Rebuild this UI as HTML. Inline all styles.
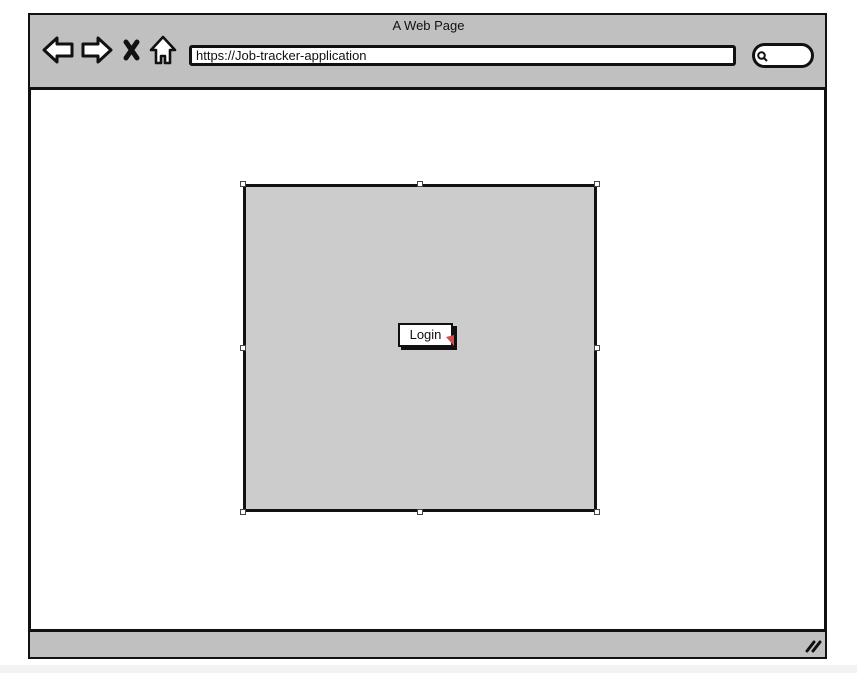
<!DOCTYPE html>
<html><head><style>
body{margin:0;width:857px;height:673px;background:#fff;position:relative;overflow:hidden;font-family:"Comic Sans MS","Liberation Sans",sans-serif}
.a{position:absolute;box-sizing:border-box}
.h{position:absolute;width:6px;height:6px;background:#fff;border:1px solid #444;box-sizing:border-box}
</style></head><body>
<div class="a" style="left:0;top:665px;width:857px;height:8px;background:#f2f2f2"></div>
<div class="a" style="left:28px;top:13px;width:799px;height:646px;border:3px solid #111;background:#fff"></div>
<div class="a" style="left:30px;top:15px;width:795px;height:75px;background:#c0c0c0;border-bottom:3px solid #111"></div>
<div class="a" style="left:30px;top:629px;width:795px;height:28px;background:#c0c0c0;border-top:3px solid #111"></div>
<div class="a" style="left:0;top:18px;width:857px;text-align:center;font-size:13px;color:#111">A Web Page</div>
<svg class="a" style="left:40px;top:35px" width="140" height="32" viewBox="0 0 140 32">
<path d="M4 15 L17 3 L17 9 L32 9 L32 21 L17 21 L17 27 Z" fill="#fff" stroke="#111" stroke-width="3" stroke-linejoin="round"/>
<path d="M71 15 L58 3 L58 9 L43 9 L43 21 L58 21 L58 27 Z" fill="#fff" stroke="#111" stroke-width="3" stroke-linejoin="round"/>
<path d="M86 7 L97 23 M97 7 L86 23" stroke="#111" stroke-width="5" stroke-linecap="round"/>
<path d="M123 2 L111 15 L116 15 L116 28 L121 28 L121 21 L125 21 L125 28 L130 28 L130 15 L135 15 Z" fill="#fff" stroke="#111" stroke-width="2.6" stroke-linejoin="round"/>
</svg>
<div class="a" style="left:189px;top:45px;width:547px;height:21px;background:#fff;border:3px solid #111;border-radius:3px;font-size:13px;line-height:15px;padding-left:4px;color:#111">https://Job-tracker-application</div>
<div class="a" style="left:752px;top:43px;width:62px;height:25px;background:#fff;border:3px solid #111;border-radius:13px"></div>
<svg class="a" style="left:756px;top:50px" width="14" height="14"><circle cx="5.5" cy="5.5" r="3.3" fill="none" stroke="#111" stroke-width="2"/><path d="M8 8 L11 11" stroke="#111" stroke-width="2"/></svg>
<svg class="a" style="left:804px;top:638px" width="20" height="16"><path d="M3 13 L10 4 M9 13 L16 4" stroke="#111" stroke-width="3" stroke-linecap="round"/></svg>
<div class="a" style="left:243px;top:184px;width:354px;height:328px;background:#ccc;border:3px solid #111"></div>
<div class="h" style="left:240px;top:181px"></div><div class="h" style="left:417px;top:181px"></div><div class="h" style="left:594px;top:181px"></div>
<div class="h" style="left:240px;top:345px"></div><div class="h" style="left:594px;top:345px"></div>
<div class="h" style="left:240px;top:509px"></div><div class="h" style="left:417px;top:509px"></div><div class="h" style="left:594px;top:509px"></div>
<div class="a" style="left:401px;top:326px;width:56px;height:24px;background:#111"></div>
<div class="a" style="left:398px;top:323px;width:55px;height:24px;background:#fff;border:2px solid #111;font-size:13px;line-height:20px;text-align:center;color:#111">Login</div>
<svg class="a" style="left:444px;top:334px" width="12" height="13"><path d="M2 3 L10 1 L10 12 Z" fill="#d05050"/></svg>
</body></html>
